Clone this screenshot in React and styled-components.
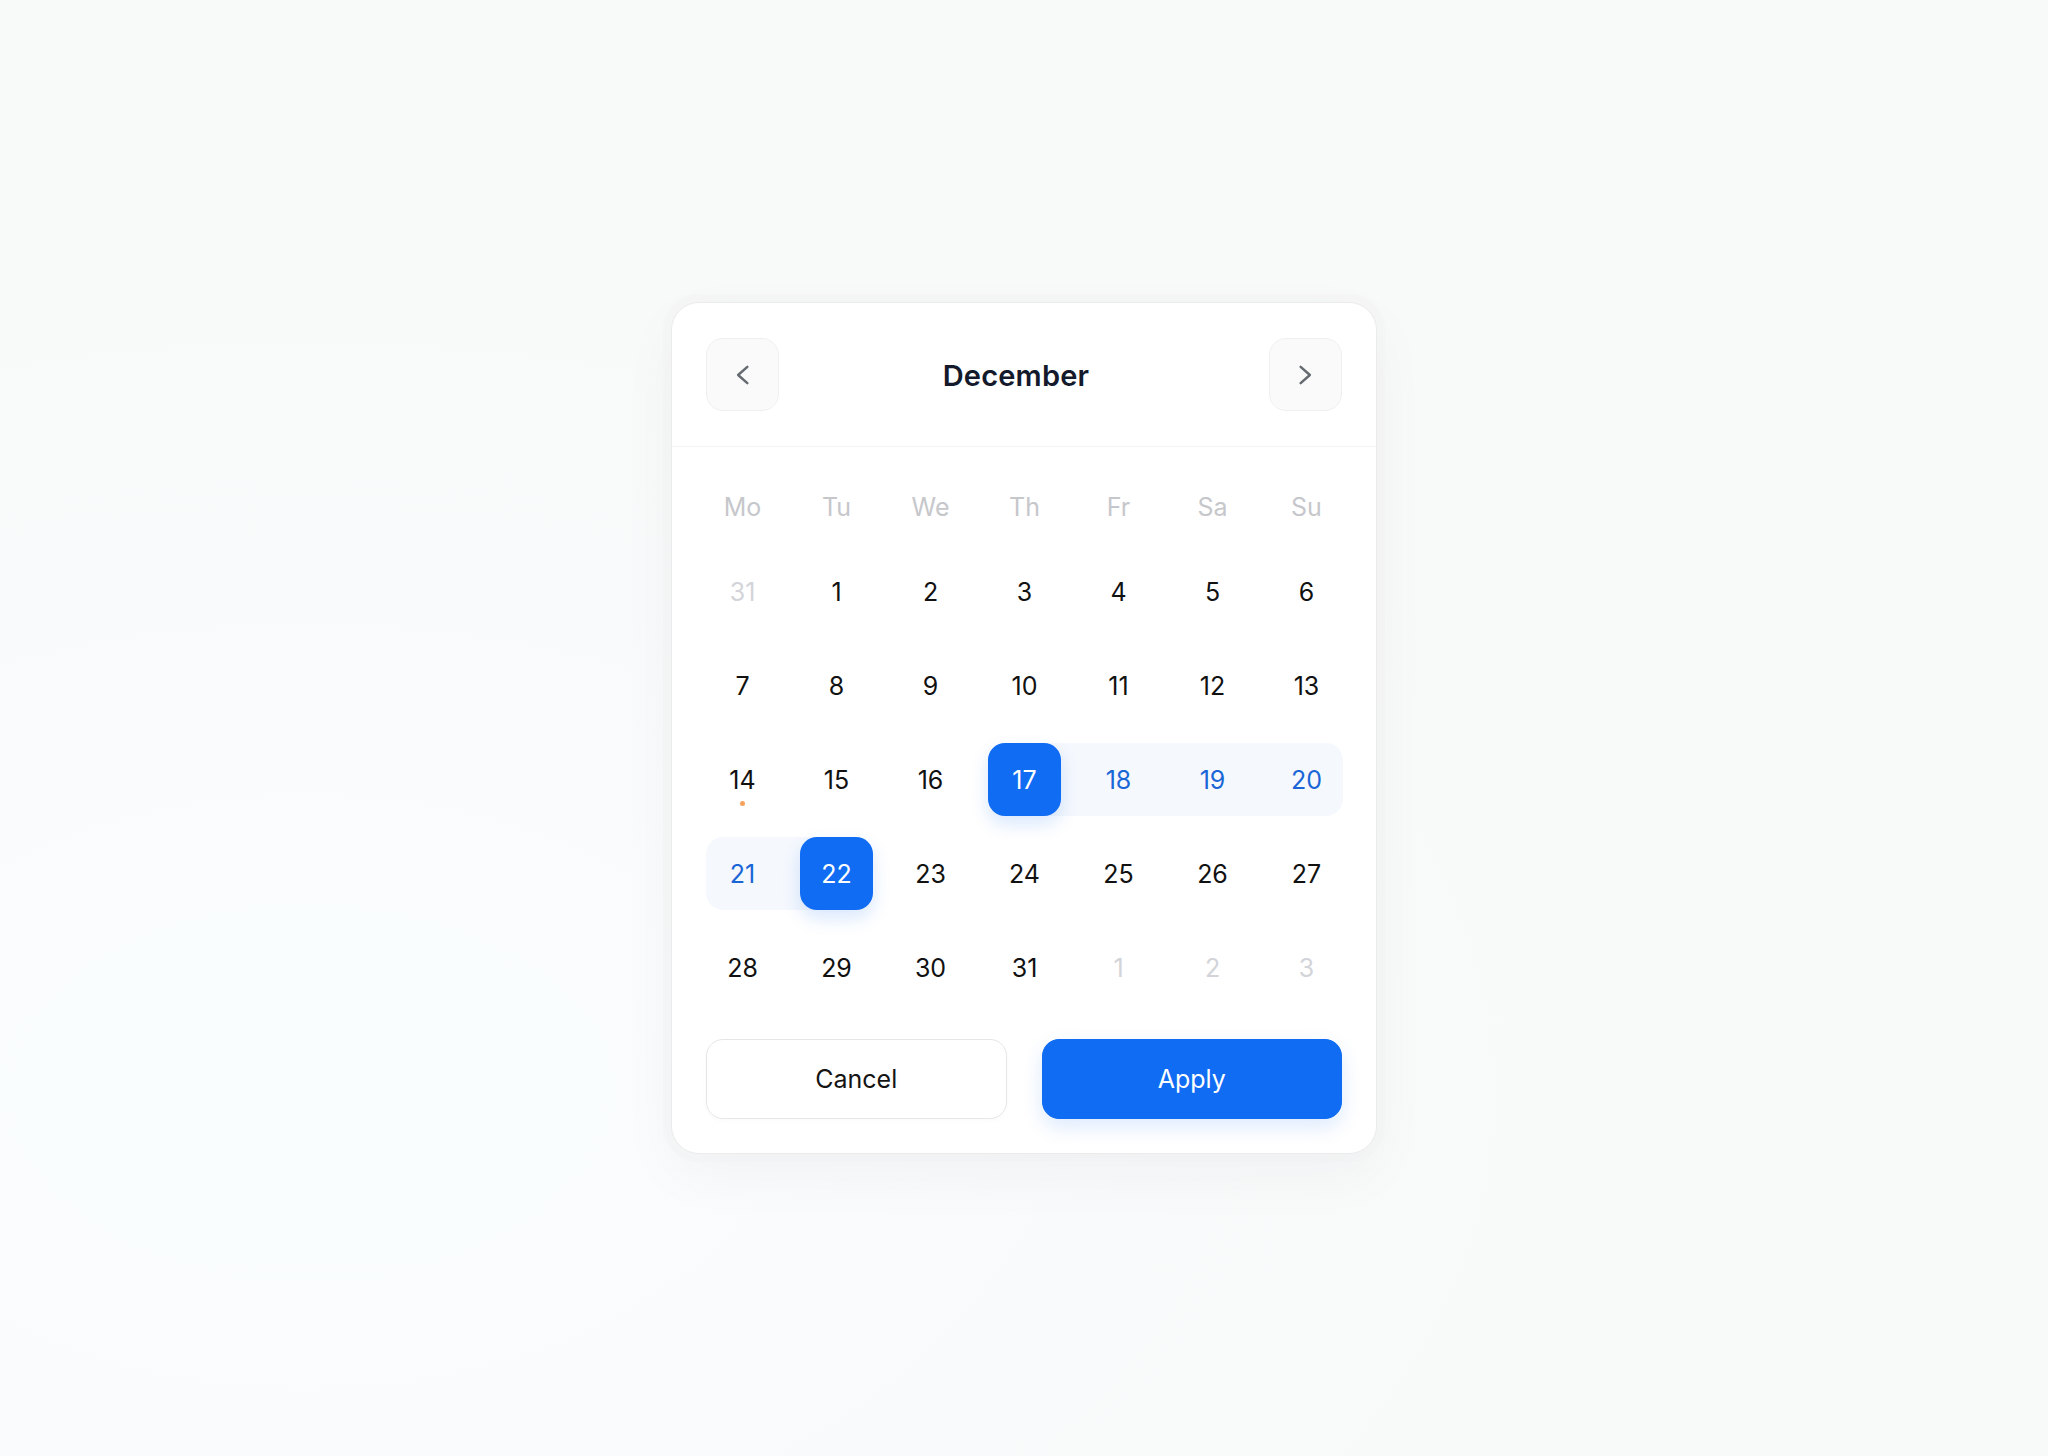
import React from 'react'
import styled, { createGlobalStyle } from 'styled-components'

const GlobalStyle = createGlobalStyle`
  html, body {
    margin: 0;
    padding: 0;
  }
  body {
    font-family: Inter, "Noto Sans", sans-serif;
    background: radial-gradient(ellipse at 15% 75%, #fafdfe 0%, #f8f9f9 55%), #f8f8f8;
    min-height: 100vh;
  }
`

const Page = styled.div`
  min-height: 100vh;
  display: flex;
  align-items: center;
  justify-content: center;
`

const Card = styled.div`
  width: 706px;
  box-sizing: border-box;
  background: #fff;
  border: 1px solid #ebebec;
  border-radius: 28px;
  box-shadow: 0 0 0 8px rgba(240, 241, 242, 0.35), 0 20px 60px rgba(20, 30, 50, 0.04);
  overflow: hidden;
`

const Header = styled.div`
  display: flex;
  align-items: center;
  justify-content: space-between;
  padding: 35px 34px;
  border-bottom: 1px solid #f2f3f5;
`

const NavButton = styled.button`
  width: 73px;
  height: 73px;
  box-sizing: border-box;
  border-radius: 17px;
  border: 1px solid #efeff1;
  background: #fafafa;
  display: flex;
  align-items: center;
  justify-content: center;
  padding: 0;
  cursor: pointer;
  color: #676b72;
`

const Title = styled.h2`
  margin: 2px 16px 0 0;
  font-size: 29px;
  font-weight: 600;
  color: #141a2b;
  letter-spacing: 0.2px;
`

const Body = styled.div`
  padding: 40px 34px 34px;
`

const WeekRow = styled.div`
  display: grid;
  grid-template-columns: repeat(7, 73px);
  column-gap: 21px;
  height: 40px;
  align-items: center;
`

const WeekDay = styled.div`
  text-align: center;
  font-size: 25px;
  color: #c6c7cb;
`

const DayGrid = styled.div`
  margin-top: 28px;
  display: grid;
  grid-template-columns: repeat(7, 73px);
  grid-auto-rows: 73px;
  gap: 21px;
`

const Day = styled.div`
  position: relative;

  &::before {
    content: '';
    display: ${p => (p.$inRange ? 'block' : 'none')};
    position: absolute;
    z-index: 0;
    top: 0;
    bottom: 0;
    left: ${p => (p.$joinLeft ? '-40px' : '0')};
    right: ${p => (p.$joinRight ? '-40px' : '0')};
    background: #f5f8fd;
    border-radius: ${p => (p.$joinLeft ? '0' : '17px')} ${p => (p.$joinRight ? '0' : '17px')} ${p => (p.$joinRight ? '0' : '17px')} ${p => (p.$joinLeft ? '0' : '17px')};
  }
`

const DayFace = styled.div`
  position: relative;
  z-index: 1;
  width: 100%;
  height: 100%;
  display: flex;
  align-items: center;
  justify-content: center;
  font-size: 25px;
  border-radius: 17px;
  color: ${p => (p.$muted ? '#d3d4d9' : p.$selected ? '#fff' : p.$inRange ? '#1a66d6' : '#111')};
  background: ${p => (p.$selected ? '#0f6cf3' : 'transparent')};
  box-shadow: ${p => (p.$selected ? '0 8px 18px rgba(15, 108, 243, 0.16)' : 'none')};
`

const Dot = styled.span`
  position: absolute;
  left: 50%;
  bottom: 10px;
  width: 5px;
  height: 5px;
  margin-left: -2.5px;
  border-radius: 50%;
  background: #f5a25f;
`

const Actions = styled.div`
  display: flex;
  gap: 35px;
  margin-top: 35px;
`

const ActionButton = styled.button`
  flex: 1;
  height: 80px;
  border-radius: 17px;
  font-family: Inter, "Noto Sans", sans-serif;
  font-size: 25px;
  cursor: pointer;
  border: 1px solid ${p => (p.$primary ? '#0f6cf3' : '#e6e6e8')};
  background: ${p => (p.$primary ? '#0f6cf3' : '#fff')};
  color: ${p => (p.$primary ? '#fff' : '#141414')};
  box-shadow: ${p => (p.$primary ? '0 8px 20px rgba(15, 108, 243, 0.14)' : '0 2px 6px rgba(0,0,0,0.02)')};
`

const Chevron = ({ dir }) => (
  <svg width="26" height="26" viewBox="0 0 24 24" fill="none" stroke="currentColor" strokeWidth="2.3" strokeLinecap="round" strokeLinejoin="round">
    {dir === 'left' ? <path d="M16 4.5L7.5 12l8.5 7.5" /> : <path d="M8 4.5l8.5 7.5L8 19.5" />}
  </svg>
)

const weekdays = ['Mo', 'Tu', 'We', 'Th', 'Fr', 'Sa', 'Su']

const days = [
  { n: 31, muted: true }, { n: 1 }, { n: 2 }, { n: 3 }, { n: 4 }, { n: 5 }, { n: 6 },
  { n: 7 }, { n: 8 }, { n: 9 }, { n: 10 }, { n: 11 }, { n: 12 }, { n: 13 },
  { n: 14, dot: true }, { n: 15 }, { n: 16 }, { n: 17, selected: true, inRange: true, joinRight: true },
  { n: 18, inRange: true, joinLeft: true }, { n: 19, inRange: true, joinLeft: true }, { n: 20, inRange: true, joinLeft: true },
  { n: 21, inRange: true, joinRight: true }, { n: 22, selected: true }, { n: 23 }, { n: 24 }, { n: 25 }, { n: 26 }, { n: 27 },
  { n: 28 }, { n: 29 }, { n: 30 }, { n: 31 }, { n: 1, muted: true }, { n: 2, muted: true }, { n: 3, muted: true },
]

export default function App() {
  return (
    <>
      <GlobalStyle />
      <Page>
        <Card>
          <Header>
            <NavButton aria-label="Previous month"><Chevron dir="left" /></NavButton>
            <Title>December</Title>
            <NavButton aria-label="Next month"><Chevron dir="right" /></NavButton>
          </Header>
          <Body>
            <WeekRow>
              {weekdays.map(w => <WeekDay key={w}>{w}</WeekDay>)}
            </WeekRow>
            <DayGrid>
              {days.map((d, i) => (
                <Day key={i} $inRange={d.inRange} $joinLeft={d.joinLeft} $joinRight={d.joinRight}>
                  <DayFace $muted={d.muted} $selected={d.selected} $inRange={d.inRange}>
                    {d.n}
                    {d.dot && <Dot />}
                  </DayFace>
                </Day>
              ))}
            </DayGrid>
            <Actions>
              <ActionButton>Cancel</ActionButton>
              <ActionButton $primary>Apply</ActionButton>
            </Actions>
          </Body>
        </Card>
      </Page>
    </>
  )
}
